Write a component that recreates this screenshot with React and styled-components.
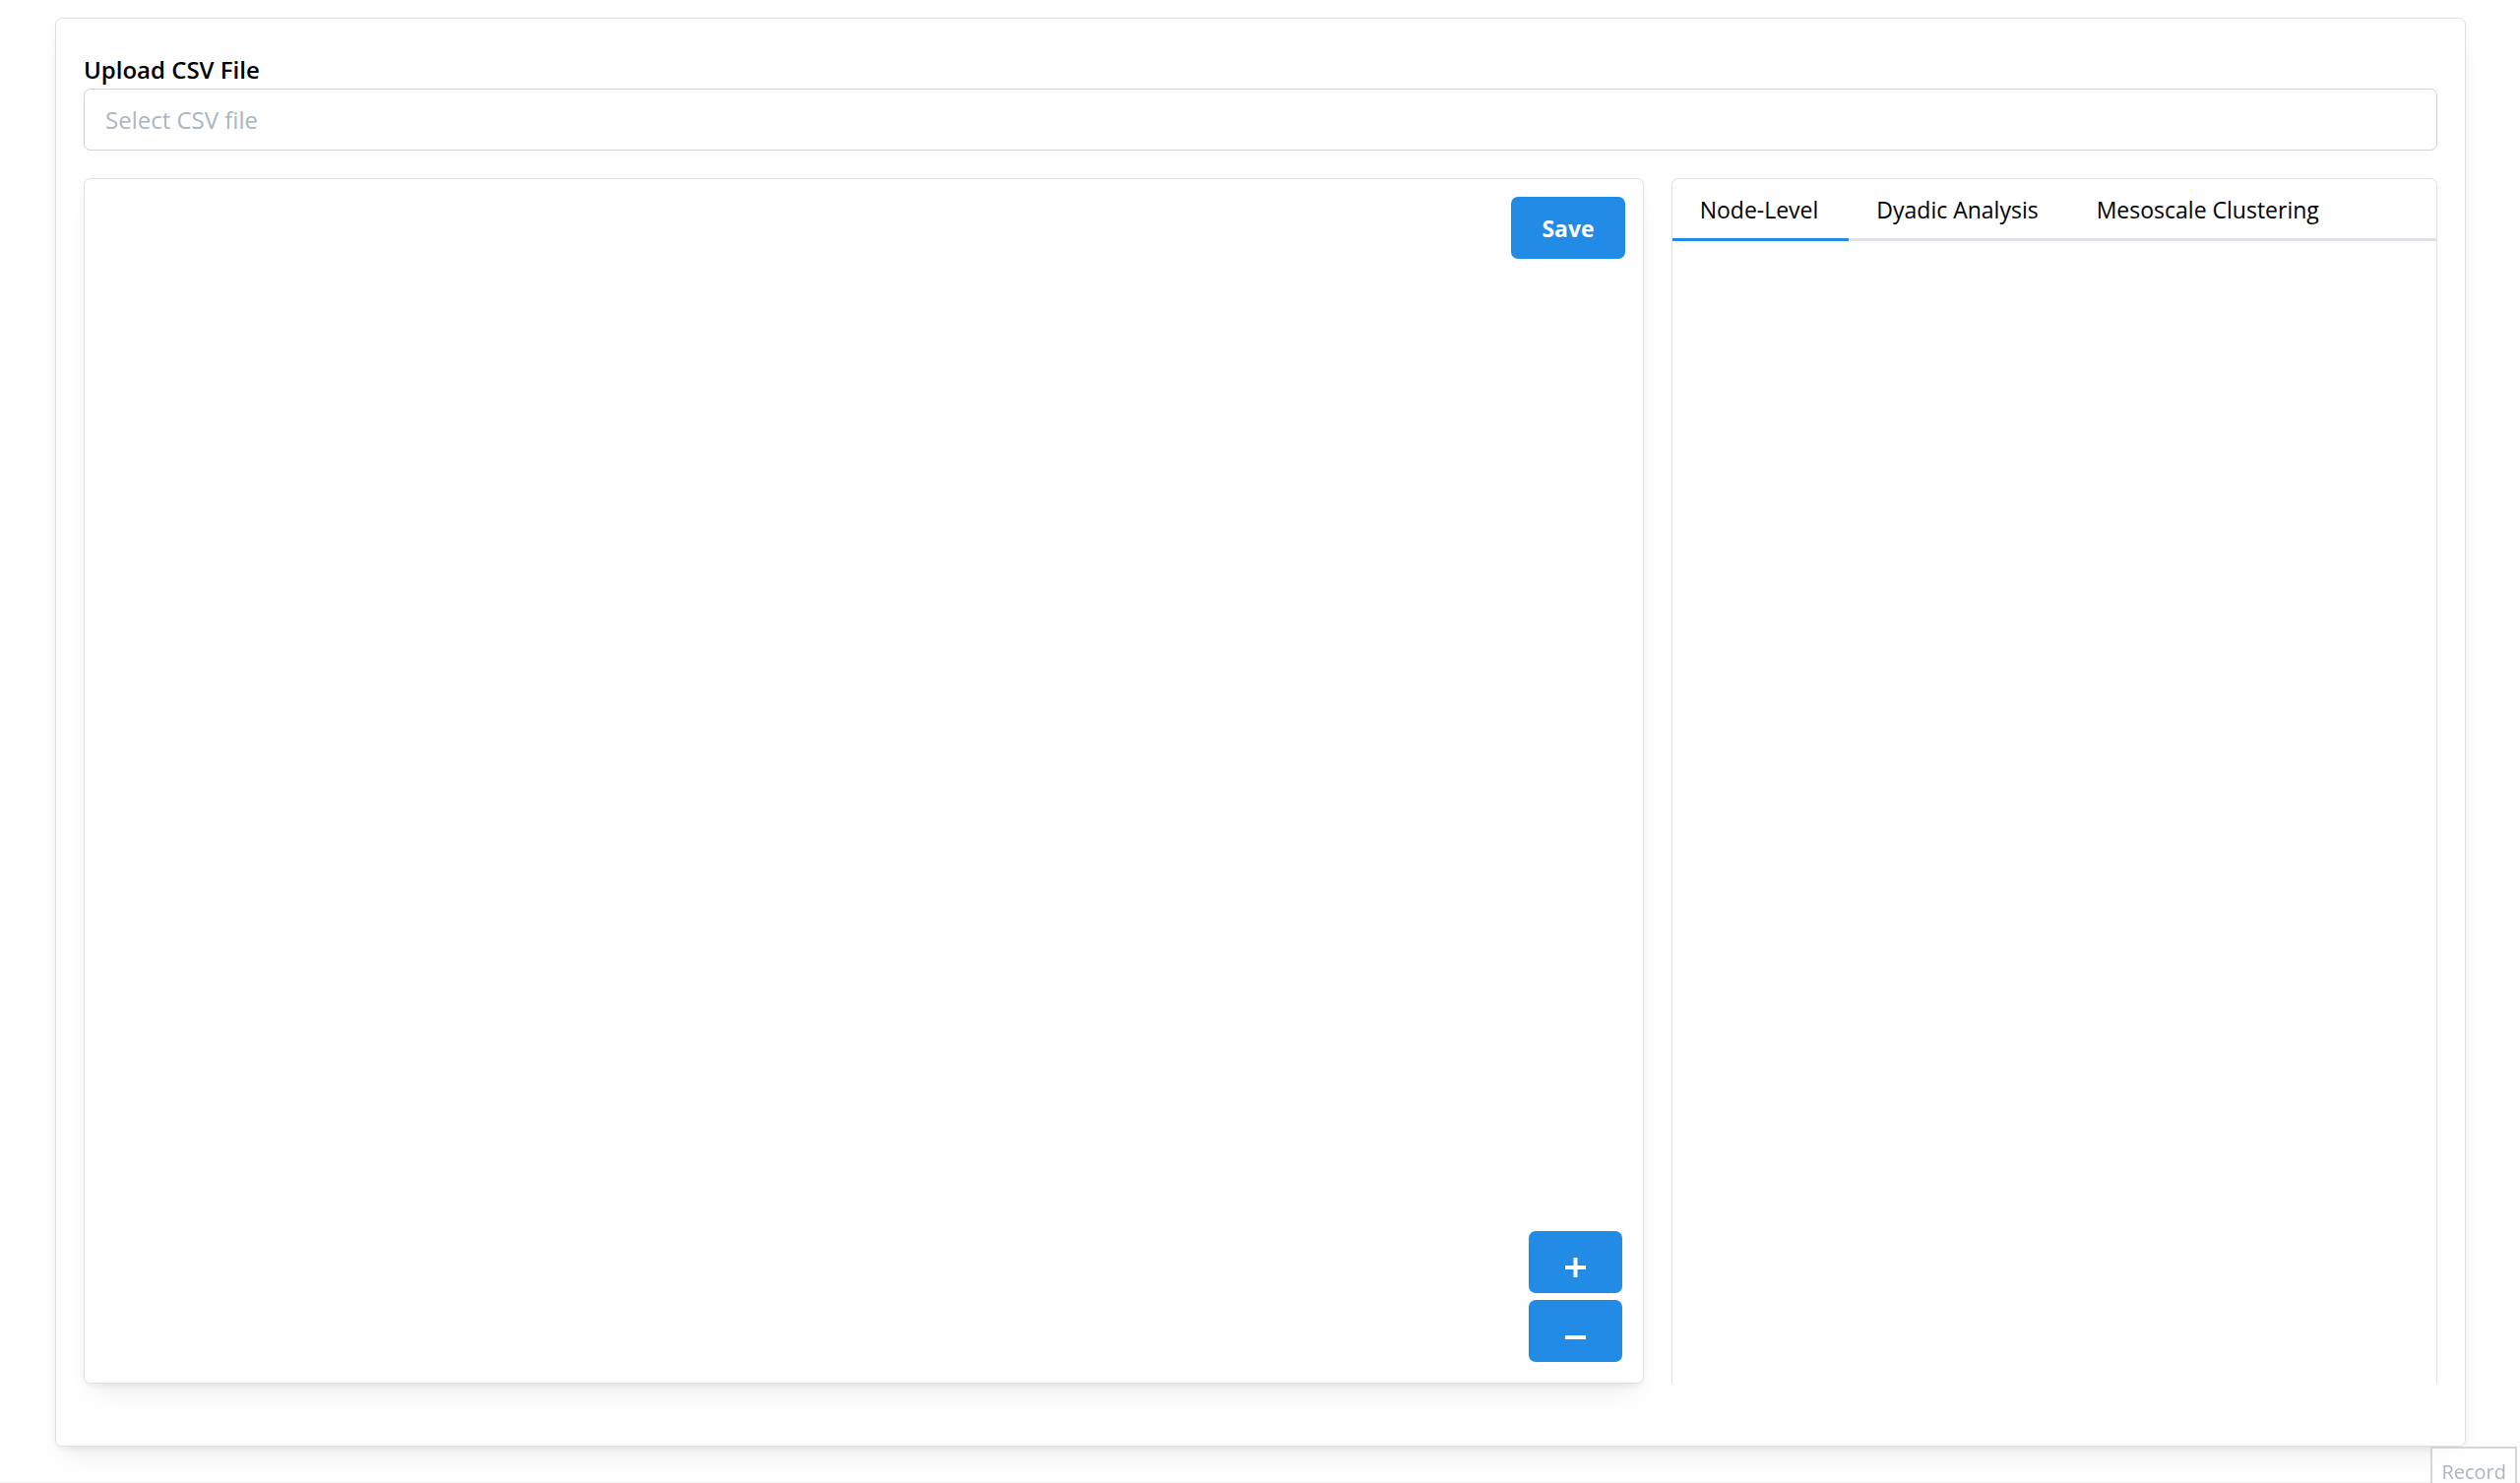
import React, { useState } from "react";
import styled, { createGlobalStyle } from "styled-components";

const BLUE = "#228be6";
const BORDER = "#dee2e6";
const INPUT_BORDER = "#ced4da";
const PLACEHOLDER = "#adb5bd";
const SHADOW = `
  0 2px 5px rgba(0, 0, 0, 0.05),
  0 18px 26px -9px rgba(0, 0, 0, 0.05),
  0 12px 12px -9px rgba(0, 0, 0, 0.04)
`;

const TABS = ["Node-Level", "Dyadic Analysis", "Mesoscale Clustering"];

const App = () => {
  const [activeTab, setActiveTab] = useState(TABS[0]);

  return (
    <>
      <GlobalStyle />
      <Page>
        <Card>
          <Field>
            <Label htmlFor="csv-file">Upload CSV File</Label>
            <FileInput id="csv-file" type="text" placeholder="Select CSV file" readOnly />
          </Field>
          <Columns>
            <Graph>
              <SaveButton type="button">Save</SaveButton>
              <ZoomControls>
                <ZoomButton type="button" aria-label="Zoom in">
                  <ZoomIcon plus />
                </ZoomButton>
                <ZoomButton type="button" aria-label="Zoom out">
                  <ZoomIcon />
                </ZoomButton>
              </ZoomControls>
            </Graph>
            <Analysis>
              <TabList role="tablist">
                {TABS.map(tab => (
                  <Tab
                    key={tab}
                    type="button"
                    role="tab"
                    aria-selected={tab === activeTab}
                    $active={tab === activeTab}
                    onClick={() => setActiveTab(tab)}
                  >
                    {tab}
                  </Tab>
                ))}
              </TabList>
            </Analysis>
          </Columns>
        </Card>
      </Page>
      <RecordButton type="button">Record</RecordButton>
    </>
  );
};

export default App;

const ZoomIcon = ({ plus }) => (
  <svg width="21" height="20" viewBox="0 0 21 20" fill="#fff" aria-hidden="true">
    {plus ? (
      <>
        <rect y="8" width="21" height="4" />
        <rect x="8.5" width="4" height="20" />
      </>
    ) : (
      <rect y="9" width="21" height="4" />
    )}
  </svg>
);

const GlobalStyle = createGlobalStyle`
  *, *::before, *::after {
    box-sizing: border-box;
  }

  body {
    margin: 0;
    background: #fefefe;
    color: #000;
    font-family: "Segoe UI", "Open Sans", sans-serif;
    font-size: 24px;
    line-height: 38px;
  }

  button, input {
    font: inherit;
  }
`;

const Page = styled.main`
  padding: 18px 55px 36px 56px;
  border-bottom: 1px solid #f1f1f1;
`;

const Card = styled.section`
  padding: 28px 28px 63px;
  border: 1px solid ${BORDER};
  border-radius: 7px;
  box-shadow: ${SHADOW};
`;

const Field = styled.div`
  display: flex;
  flex-direction: column;
  padding-top: 5px;
  margin-bottom: 28px;
`;

const Label = styled.label`
  font-weight: 600;
`;

const FileInput = styled.input`
  width: 100%;
  height: 63px;
  padding: 0 21px;
  border: 1px solid ${INPUT_BORDER};
  border-radius: 7px;
  background: transparent;
  cursor: pointer;

  &::placeholder {
    color: ${PLACEHOLDER};
    opacity: 1;
  }
`;

const Columns = styled.div`
  display: grid;
  grid-template-columns: repeat(12, 1fr);
  gap: 28px;
`;

const Graph = styled.div`
  grid-column: span 8;
  display: flex;
  flex-direction: column;
  justify-content: space-between;
  align-items: flex-end;
  height: 1225px;
  padding: 18px 18px 21px;
  border: 1px solid ${BORDER};
  border-radius: 7px;
  box-shadow: ${SHADOW};
`;

const Button = styled.button`
  height: 63px;
  border: 0;
  border-radius: 7px;
  background: ${BLUE};
  color: #fff;
  cursor: pointer;
`;

const SaveButton = styled(Button)`
  padding: 0 31px;
  font-size: 23px;
  font-weight: 700;
`;

const ZoomControls = styled.div`
  display: flex;
  flex-direction: column;
  gap: 7px;
  padding-right: 3px;
`;

const ZoomButton = styled(Button)`
  display: flex;
  align-items: center;
  justify-content: center;
  width: 95px;
  padding: 10px 0 0;
`;

const Analysis = styled.div`
  grid-column: span 4;
  border: 1px solid ${BORDER};
  border-bottom: 0;
  border-radius: 7px 7px 0 0;
`;

const TabList = styled.div`
  display: flex;
  box-shadow: inset 0 -3px ${BORDER};
`;

const Tab = styled.button`
  height: 63px;
  padding: 2px 31px 0 28px;
  border: 0;
  border-bottom: 3px solid ${({ $active }) => ($active ? BLUE : "transparent")};
  background: none;
  color: inherit;
  font-size: 23px;
  white-space: nowrap;
  cursor: pointer;
`;

const RecordButton = styled.button`
  position: fixed;
  right: 3px;
  bottom: -15px;
  height: 52px;
  padding: 0 9px;
  border: 2px solid #d3d6d9;
  background: rgba(254, 254, 254, 0.8);
  color: ${PLACEHOLDER};
  font-size: 20px;
`;
